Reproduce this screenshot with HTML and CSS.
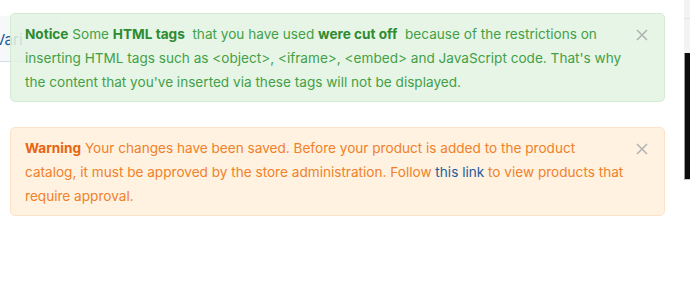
FILE: index.html
```html
<!DOCTYPE html>
<html lang="en">
<head>
<meta charset="utf-8">
<title>Notifications</title>
<link rel="stylesheet" href="styles.css">
</head>
<body>
<div class="backdrop">
  <div class="bg-tab"><span class="bg-tab-label">Vari</span></div>
  <div class="bg-side">
    <div class="bg-side-top"></div>
    <div class="bg-side-dark"></div>
  </div>
</div>
<div class="notices">
  <div class="alert alert-success">
    <button class="close" aria-label="Close"><svg viewBox="0 0 12 12" width="12" height="12"><path d="M1 1L11 11M11 1L1 11"/></svg></button>
    <p class="alert-text"><strong>Notice</strong> Some <strong>HTML tags</strong>&nbsp; that you have used <strong>were cut off</strong>&nbsp; because of the restrictions on<br>inserting HTML tags such as &lt;object&gt;, &lt;iframe&gt;, &lt;embed&gt; and JavaScript code. That's why<br>the content that you've inserted via these tags will not be displayed.</p>
  </div>
  <div class="alert alert-warning">
    <button class="close" aria-label="Close"><svg viewBox="0 0 12 12" width="12" height="12"><path d="M1 1L11 11M11 1L1 11"/></svg></button>
    <p class="alert-text"><strong>Warning</strong> Your changes have been saved. Before your product is added to the product<br>catalog, it must be approved by the store administration. Follow <a href="#">this link</a> to view products that<br>require approval.</p>
  </div>
</div>
</body>
</html>
```

FILE: styles.css
```css
html, body {
  margin: 0;
  padding: 0;
  background: #ffffff;
}
body {
  font-family: "Inter", "Liberation Sans", sans-serif;
  font-size: 13.6px;
  position: relative;
  width: 690px;
  height: 301px;
  overflow: hidden;
}
.backdrop {
  position: absolute;
  inset: 0;
  z-index: 0;
}
.bg-tab {
  position: absolute;
  left: 0;
  top: 16px;
  width: 60px;
  height: 46px;
  background: #f7f8fa;
  border-bottom: 1px solid #d6dde6;
  box-sizing: border-box;
}
.bg-tab-label {
  position: absolute;
  left: -5px;
  top: 14px;
  color: #1f5c9e;
  font-size: 15px;
  line-height: 20px;
}
.bg-side {
  position: absolute;
  left: 684px;
  top: 0;
  width: 6px;
  height: 180px;
}
.bg-side-top {
  height: 53px;
  background-image: linear-gradient(#f3f3f3 0 18px, #e4e4e4 18px 19px, #f3f3f3 19px);
}
.bg-side-dark {
  height: 126px;
  background: #0d0d0d;
  border-left: 1px solid #9a9a9a;
  border-bottom: 1px solid #c8c8c8;
}
.notices {
  position: relative;
  z-index: 1;
  padding: 13px 25px 0 10px;
  display: flex;
  flex-direction: column;
  gap: 25px;
}
.alert {
  position: relative;
  border-radius: 5px;
  padding: 8px 28px 7px 14px;
  border: 1px solid;
}
.alert-text {
  margin: 0;
  line-height: 24px;
  white-space: nowrap;
}
.alert-success {
  background: rgba(226, 243, 226, 0.85);
  border-color: #d3ebd3;
  color: #43a047;
}
.alert-success strong {
  color: #2e8b32;
  font-weight: 700;
}
.alert-warning {
  background: #fff2e1;
  border-color: #fde2c7;
  color: #f0812a;
}
.alert-warning strong {
  color: #e8640f;
  font-weight: 700;
}
.alert a {
  color: #1e5a9c;
  text-decoration: none;
}
.close {
  position: absolute;
  top: 14px;
  right: 15px;
  width: 14px;
  height: 13px;
  padding: 0;
  border: 0;
  background: none;
  display: flex;
  align-items: center;
  justify-content: center;
}
.close svg path {
  stroke: #b3b3b3;
  stroke-width: 1.6;
  fill: none;
}
```
